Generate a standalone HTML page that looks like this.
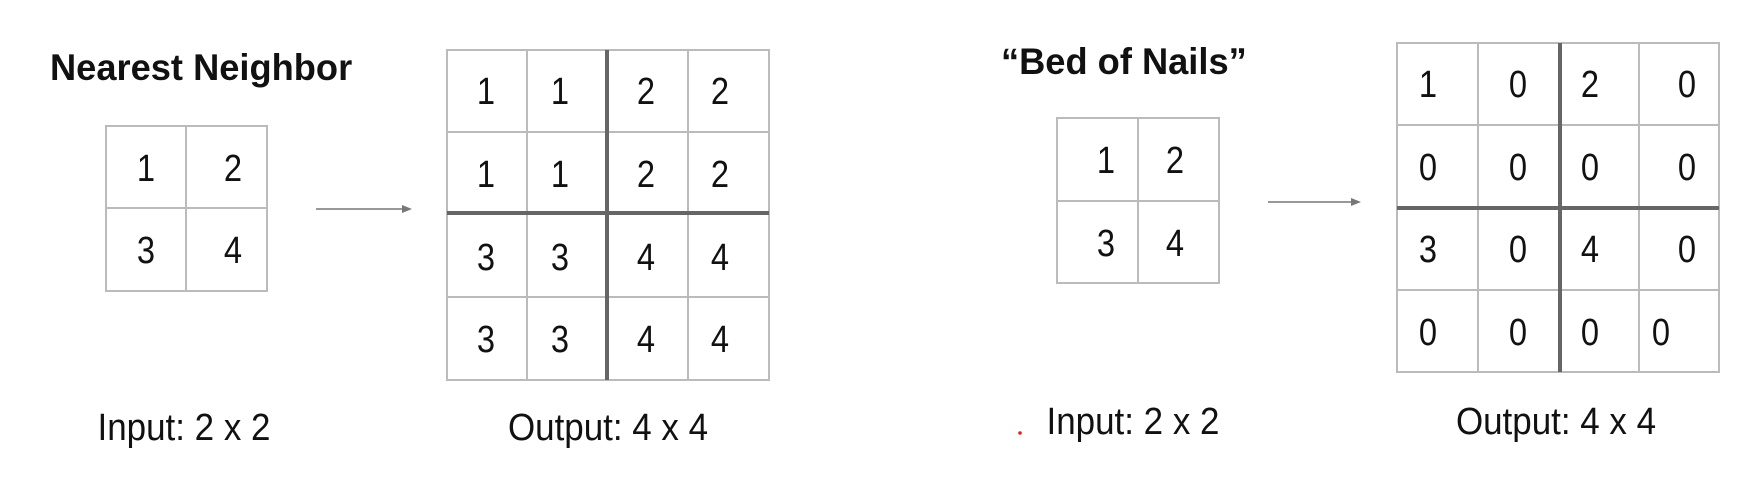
<!DOCTYPE html>
<html><head><meta charset="utf-8"><style>
html,body{margin:0;padding:0;background:#fff;width:1759px;height:484px;overflow:hidden}
svg{display:block}
text{font-family:"Liberation Sans",Arial,sans-serif;fill:#111}
.c{transform-box:fill-box;transform-origin:center;transform:scaleX(0.86)}
.t{transform-box:fill-box;transform-origin:left center;transform:scaleX(0.98)}
.l{transform-box:fill-box;transform-origin:center;transform:scaleX(0.92)}
</style></head><body>
<svg width="1759" height="484" viewBox="0 0 1759 484">
<g text-anchor="middle">
<text class="t" x="50" y="80" text-anchor="start" font-weight="bold" font-size="37">Nearest Neighbor</text>
<text class="t" x="1001" y="74" text-anchor="start" font-weight="bold" font-size="37">“Bed of Nails”</text>

<g stroke="#bbb" stroke-width="2" fill="none">
<rect x="106" y="126" width="161" height="165"/>
<line x1="186" y1="126" x2="186" y2="291"/>
<line x1="106" y1="208" x2="267" y2="208"/>
</g>
<g font-size="38">
<text class="c" x="146" y="181">1</text><text class="c" x="233" y="181">2</text>
<text class="c" x="146" y="263">3</text><text class="c" x="233" y="263">4</text>
</g>

<line x1="316" y1="209" x2="404" y2="209" stroke="#777" stroke-width="1.5"/>
<polygon points="412,209 402,205 402,213" fill="#777"/>

<g stroke="#bbb" stroke-width="2" fill="none">
<rect x="447" y="50" width="322" height="330"/>
<line x1="527" y1="50" x2="527" y2="380"/>
<line x1="688" y1="50" x2="688" y2="380"/>
<line x1="447" y1="132" x2="769" y2="132"/>
<line x1="447" y1="297" x2="769" y2="297"/>
</g>
<line x1="607" y1="50" x2="607" y2="380" stroke="#666" stroke-width="4"/>
<line x1="447" y1="213" x2="769" y2="213" stroke="#666" stroke-width="4"/>
<g font-size="38">
<text class="c" x="486" y="104">1</text><text class="c" x="560" y="104">1</text><text class="c" x="646" y="104">2</text><text class="c" x="720" y="104">2</text>
<text class="c" x="486" y="187">1</text><text class="c" x="560" y="187">1</text><text class="c" x="646" y="187">2</text><text class="c" x="720" y="187">2</text>
<text class="c" x="486" y="270">3</text><text class="c" x="560" y="270">3</text><text class="c" x="646" y="270">4</text><text class="c" x="720" y="270">4</text>
<text class="c" x="486" y="352">3</text><text class="c" x="560" y="352">3</text><text class="c" x="646" y="352">4</text><text class="c" x="720" y="352">4</text>
</g>

<text class="l" x="184" y="440" font-size="38">Input: 2 x 2</text>
<text class="l" x="608" y="440" font-size="38">Output: 4 x 4</text>

<g transform="translate(-7 0)">
<g stroke="#bbb" stroke-width="2" fill="none">
<rect x="1064" y="118" width="162" height="165"/>
<line x1="1145" y1="118" x2="1145" y2="283"/>
<line x1="1064" y1="201" x2="1226" y2="201"/>
</g>
<g font-size="38">
<text class="c" x="1113" y="173">1</text><text class="c" x="1182" y="173">2</text>
<text class="c" x="1113" y="256">3</text><text class="c" x="1182" y="256">4</text>
</g>

<line x1="1275" y1="202" x2="1360" y2="202" stroke="#777" stroke-width="1.5"/>
<polygon points="1368,202 1358,198 1358,206" fill="#777"/>

<g stroke="#bbb" stroke-width="2" fill="none">
<rect x="1404" y="43" width="322" height="329"/>
<line x1="1485" y1="43" x2="1485" y2="372"/>
<line x1="1646" y1="43" x2="1646" y2="372"/>
<line x1="1404" y1="125" x2="1726" y2="125"/>
<line x1="1404" y1="290" x2="1726" y2="290"/>
</g>
<line x1="1567" y1="43" x2="1567" y2="372" stroke="#666" stroke-width="4"/>
<line x1="1404" y1="208" x2="1726" y2="208" stroke="#666" stroke-width="4"/>
<g font-size="38">
<text class="c" x="1435" y="97">1</text><text class="c" x="1525" y="97">0</text><text class="c" x="1597" y="97">2</text><text class="c" x="1694" y="97">0</text>
<text class="c" x="1435" y="180">0</text><text class="c" x="1525" y="180">0</text><text class="c" x="1597" y="180">0</text><text class="c" x="1694" y="180">0</text>
<text class="c" x="1435" y="262">3</text><text class="c" x="1525" y="262">0</text><text class="c" x="1597" y="262">4</text><text class="c" x="1694" y="262">0</text>
<text class="c" x="1435" y="345">0</text><text class="c" x="1525" y="345">0</text><text class="c" x="1597" y="345">0</text><text class="c" x="1668" y="345">0</text>
</g>
<text class="l" x="1563" y="434" font-size="38">Output: 4 x 4</text>
</g>

<circle cx="1020" cy="433" r="1.8" fill="#d22"/>
<text class="l" x="1133" y="434" font-size="38">Input: 2 x 2</text>
</g>
</svg>
</body></html>
